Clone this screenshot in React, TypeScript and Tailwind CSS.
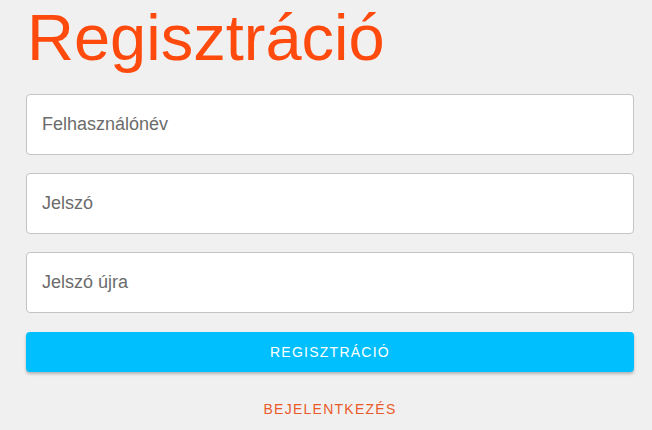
export default function App() {
  const fields = ["Felhasználónév", "Jelszó", "Jelszó újra"];

  return (
    <div className="min-h-[430px] w-full bg-[#f0f0f0] pl-[26px] pr-[18px] font-['Liberation_Sans',Arial,sans-serif]">
      <h1 className="h-[76px] pl-[1px] text-[65px] leading-[76px] font-normal text-[#ff4a0d]">
        Regisztráció
      </h1>

      <div className="mt-[18px] flex flex-col gap-[18px]">
        {fields.map((label) => (
          <input
            key={label}
            type={label.startsWith("Jelszó") ? "password" : "text"}
            placeholder={label}
            className="h-[61px] w-full rounded-[4px] border border-[#c4c4c4] bg-white px-[15px] font-['Liberation_Sans',Arial,sans-serif] text-[18px] text-[#333] placeholder:text-[#6b6b6b] outline-none"
          />
        ))}
      </div>

      <button
        type="button"
        className="mt-[19px] h-[40px] w-full rounded-[4px] bg-[#00bfff] font-['Liberation_Sans',Arial,sans-serif] text-[14px] tracking-[1.25px] text-white uppercase shadow-[0_2px_3px_rgba(0,0,0,0.25)]"
      >
        Regisztráció
      </button>

      <div className="mt-[27px] flex justify-center">
        <button
          type="button"
          className="h-[20px] font-['Liberation_Sans',Arial,sans-serif] text-[14px] leading-[20px] tracking-[1.25px] uppercase text-[#ea5a2a]"
        >
          Bejelentkezés
        </button>
      </div>
    </div>
  );
}
